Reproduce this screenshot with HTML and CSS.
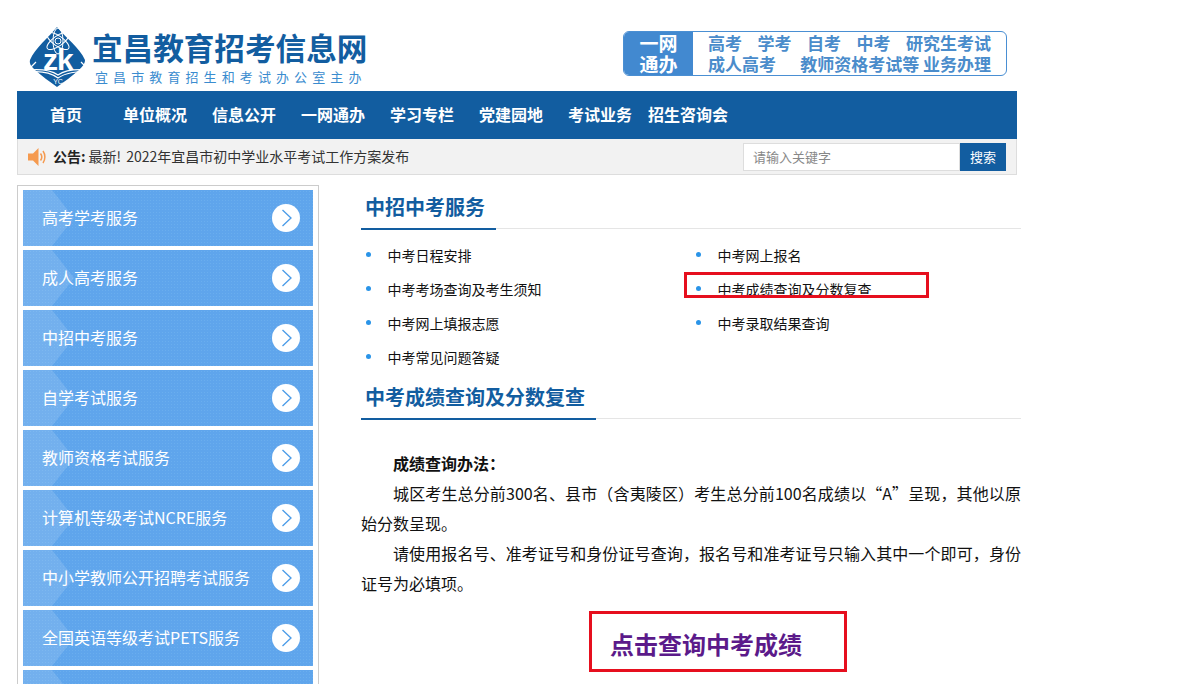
FILE: index.html
```html
<!DOCTYPE html>
<html lang="zh-CN">
<head>
    <meta charset="UTF-8">
    <meta name="viewport" content="width=device-width, initial-scale=1.0">
    <title>宜昌教育招考信息网</title>
    <link rel="stylesheet" href="styles.css">
</head>
<body>
    <div class="page_wrap">

        <div class="top_head">
            <div class="logo_box">
                <svg class="logo_icon" width="64" height="62" viewBox="0 0 64 62">
                    <path d="M30 1 C38 11 53 22 58 34 C58 38 55 41 52 44 C45 50 37 56 30 61 C23 56 15 50 8 44 C5 41 2 38 3 34 C8 22 22 11 30 1Z" fill="#125da0"/>
                    <g fill="none" stroke="#fff" stroke-width="1">
                        <ellipse cx="31" cy="15" rx="13" ry="5" transform="rotate(35 31 15)"/>
                        <ellipse cx="31" cy="15" rx="13" ry="5" transform="rotate(-35 31 15)"/>
                        <ellipse cx="31" cy="15" rx="13" ry="5" transform="rotate(90 31 15)"/>
                        <circle cx="31" cy="15" r="3"/>
                    </g>
                    <text x="16" y="44" class="logo_z">z</text>
                    <text x="30" y="44" class="logo_k">k</text>
                    <path d="M1 44 L9 36 M1 44 C12 43 24 44 31 49 C38 44 50 43 62 44 L54 36 M1 44 L3 46 C13 45 24 47 31 52 C38 47 50 45 60 46 L62 44" fill="none" stroke="#fff" stroke-width="1.2"/>
                    <text x="31" y="58" class="logo_yc">YC</text>
                </svg>
                <div class="logo_text">
                    <div class="logo_title">宜昌教育招考信息网</div>
                    <div class="logo_sub">宜昌市教育招生和考试办公室主办</div>
                </div>
            </div>

            <div class="top_links">
                <div class="top_links_left">一网<br>通办</div>
                <div class="top_links_right">
                    <div class="top_row">
                        <a>高考</a><a>学考</a><a>自考</a><a>中考</a><a>研究生考试</a>
                    </div>
                    <div class="top_row">
                        <a>成人高考</a><a>教师资格考试等 业务办理</a>
                    </div>
                </div>
            </div>
        </div>

        <ul class="nav_bar">
            <li class="nav_home">首页</li>
            <li>单位概况</li>
            <li>信息公开</li>
            <li>一网通办</li>
            <li>学习专栏</li>
            <li>党建园地</li>
            <li>考试业务</li>
            <li class="nav_last">招生咨询会</li>
        </ul>

        <div class="notice_bar">
            <svg class="notice_icon" width="20" height="20" viewBox="0 0 20 20">
                <path d="M0 6.5 H5 L10.5 1 V19 L5 13.5 H0Z" fill="#f59a4f"/>
                <path d="M12.5 6.5 C14 8.5 14 11.5 12.5 13.5 M15 4 C17.5 7.5 17.5 12.5 15 16" fill="none" stroke="#f59a4f" stroke-width="1.5"/>
            </svg>
            <b class="notice_label">公告:</b>
            <span class="notice_text">最新! 2022年宜昌市初中学业水平考试工作方案发布</span>
            <div class="search_box">
                <input class="search_input" type="text" placeholder="请输入关键字">
                <button class="search_btn">搜索</button>
            </div>
        </div>

        <div class="content">
            <div class="side_box">
                <a class="side_item"><span>高考学考服务</span><svg class="side_arrow" viewBox="0 0 28 28"><circle cx="14" cy="14" r="14" fill="#fff"/><path d="M10.5 6 L19 14 L10.5 22" fill="none" stroke="#4a9be8" stroke-width="1.3"/></svg></a>
                <a class="side_item"><span>成人高考服务</span><svg class="side_arrow" viewBox="0 0 28 28"><circle cx="14" cy="14" r="14" fill="#fff"/><path d="M10.5 6 L19 14 L10.5 22" fill="none" stroke="#4a9be8" stroke-width="1.3"/></svg></a>
                <a class="side_item"><span>中招中考服务</span><svg class="side_arrow" viewBox="0 0 28 28"><circle cx="14" cy="14" r="14" fill="#fff"/><path d="M10.5 6 L19 14 L10.5 22" fill="none" stroke="#4a9be8" stroke-width="1.3"/></svg></a>
                <a class="side_item"><span>自学考试服务</span><svg class="side_arrow" viewBox="0 0 28 28"><circle cx="14" cy="14" r="14" fill="#fff"/><path d="M10.5 6 L19 14 L10.5 22" fill="none" stroke="#4a9be8" stroke-width="1.3"/></svg></a>
                <a class="side_item"><span>教师资格考试服务</span><svg class="side_arrow" viewBox="0 0 28 28"><circle cx="14" cy="14" r="14" fill="#fff"/><path d="M10.5 6 L19 14 L10.5 22" fill="none" stroke="#4a9be8" stroke-width="1.3"/></svg></a>
                <a class="side_item"><span>计算机等级考试NCRE服务</span><svg class="side_arrow" viewBox="0 0 28 28"><circle cx="14" cy="14" r="14" fill="#fff"/><path d="M10.5 6 L19 14 L10.5 22" fill="none" stroke="#4a9be8" stroke-width="1.3"/></svg></a>
                <a class="side_item"><span>中小学教师公开招聘考试服务</span><svg class="side_arrow" viewBox="0 0 28 28"><circle cx="14" cy="14" r="14" fill="#fff"/><path d="M10.5 6 L19 14 L10.5 22" fill="none" stroke="#4a9be8" stroke-width="1.3"/></svg></a>
                <a class="side_item"><span>全国英语等级考试PETS服务</span><svg class="side_arrow" viewBox="0 0 28 28"><circle cx="14" cy="14" r="14" fill="#fff"/><path d="M10.5 6 L19 14 L10.5 22" fill="none" stroke="#4a9be8" stroke-width="1.3"/></svg></a>
                <a class="side_item"></a>
            </div>

            <div class="main_col">
                <div class="sec_title"><h2>中招中考服务</h2></div>
                <ul class="link_list">
                    <li>中考日程安排</li>
                    <li>中考网上报名</li>
                    <li>中考考场查询及考生须知</li>
                    <li class="marked">中考成绩查询及分数复查</li>
                    <li>中考网上填报志愿</li>
                    <li>中考录取结果查询</li>
                    <li>中考常见问题答疑</li>
                </ul>

                <div class="sec_title"><h2>中考成绩查询及分数复查</h2></div>
                <div class="article">
                    <p><b>成绩查询办法：</b></p>
                    <p>城区考生总分前300名、县市（含夷陵区）考生总分前100名成绩以“A”呈现，其他以原始分数呈现。</p>
                    <p>请使用报名号、准考证号和身份证号查询，报名号和准考证号只输入其中一个即可，身份证号为必填项。</p>
                </div>
                <a class="query_btn">点击查询中考成绩</a>
            </div>
        </div>

    </div>
</body>
</html>
```

FILE: styles.css
```css
html,body{
    margin: 0;
    padding: 0;
    height: 100%;
    overflow: hidden;
    background-color: #fff;
    font-family: "Noto Sans CJK SC", "Liberation Sans", sans-serif;
}
ul,p,h2{
    margin: 0;
    padding: 0;
}
ul{
    list-style: none;
}

.page_wrap{
    width: 1000px;
    margin-left: 17px;
}

/* top */
.top_head{
    height: 91px;
    box-sizing: border-box;
    padding-top: 26px;
    display: flex;
    justify-content: space-between;
    align-items: flex-start;
}
.logo_box{
    display: flex;
    padding-left: 10px;
}
.logo_icon{
    display: block;
    flex-shrink: 0;
}
.logo_z,.logo_k{
    fill: #fff;
    font-family: "Liberation Sans", sans-serif;
    font-weight: bold;
    font-size: 30px;
}
.logo_yc{
    fill: #fff;
    font-family: "Liberation Sans", sans-serif;
    font-size: 7px;
    text-anchor: middle;
}
.logo_text{
    margin-left: 1px;
}
.logo_title{
    font-size: 30.6px;
    line-height: 42px;
    font-weight: bold;
    color: #125da0;
    white-space: nowrap;
}
.logo_sub{
    margin-left: 3px;
    font-size: 13px;
    line-height: 17px;
    letter-spacing: 5.1px;
    color: #3a8ccf;
    white-space: nowrap;
}

.top_links{
    margin: 5px 10px 0 0;
    width: 384px;
    height: 45px;
    box-sizing: border-box;
    border: 1px solid #4a8fd3;
    border-radius: 6px;
    display: flex;
}
.top_links_left{
    width: 69px;
    background-color: #4289d0;
    border-radius: 5px 0 0 5px;
    color: #fff;
    font-size: 19px;
    font-weight: bold;
    line-height: 21px;
    text-align: center;
}
.top_links_right{
    width: 283px;
    margin-left: 15px;
}
.top_row{
    display: flex;
    justify-content: space-between;
    font-size: 17px;
    font-weight: bold;
    line-height: 21px;
    color: #4a8ccb;
    white-space: nowrap;
}

/* nav */
.nav_bar{
    height: 48px;
    box-sizing: border-box;
    background-color: #125da0;
    padding: 0 0 2px 33px;
    display: flex;
    align-items: center;
    gap: 25px;
}
.nav_bar li{
    color: #fff;
    font-size: 16px;
    font-weight: bold;
    white-space: nowrap;
}
.nav_home{
    margin-right: 16px;
}
.nav_last{
    margin-left: -9px;
}

/* notice */
.notice_bar{
    height: 36px;
    box-sizing: border-box;
    background-color: #f2f2f2;
    border: 1px solid #ddd;
    border-width: 0 1px 1px 1px;
    padding-left: 10px;
    display: flex;
    align-items: center;
    font-size: 14px;
    color: #333;
}
.notice_icon{
    flex-shrink: 0;
}
.notice_label{
    margin-left: 5px;
    margin-bottom: 1px;
    color: #222;
}
.notice_text{
    margin-left: 3px;
    margin-bottom: 1px;
    word-spacing: 2px;
    white-space: nowrap;
}
.search_box{
    margin-left: auto;
    margin-right: 10px;
    display: flex;
}
.search_input{
    width: 217px;
    height: 28px;
    box-sizing: border-box;
    border: 1px solid #ddd;
    outline: none;
    padding: 0 0 0 9px;
    font-size: 13px;
    font-family: inherit;
    background-color: #fff;
}
.search_input::placeholder{
    color: #888;
}
.search_btn{
    width: 46px;
    height: 28px;
    border: 0;
    padding: 0;
    background-color: #125da0;
    color: #fff;
    font-size: 13px;
    font-family: inherit;
}

/* content */
.content{
    margin-top: 10px;
    display: flex;
    align-items: flex-start;
}
.side_box{
    width: 302px;
    flex-shrink: 0;
    box-sizing: border-box;
    border: 1px solid #ccc;
    padding: 4px 5px;
    display: flex;
    flex-direction: column;
    gap: 4px;
}
.side_item{
    position: relative;
    height: 56px;
    display: flex;
    align-items: center;
    justify-content: space-between;
    padding: 0 13px 0 19px;
    color: #fff;
    font-size: 16px;
    white-space: nowrap;
    background-color: #5fa5ec;
    background-image: radial-gradient(#6aaeee 1px, transparent 1px);
    background-size: 3px 3px;
}
.side_item::before{
    content: "";
    position: absolute;
    left: 0;
    top: 0;
    width: 51px;
    height: 100%;
    background-color: rgba(255, 255, 255, 0.13);
    clip-path: polygon(0 0, 57% 0, 100% 50%, 57% 100%, 0 100%);
}
.side_item span{
    position: relative;
    margin-bottom: 2px;
}
.side_arrow{
    width: 28px;
    height: 28px;
    flex-shrink: 0;
}

.main_col{
    width: 660px;
    flex-shrink: 0;
    margin-left: 42px;
}
.sec_title{
    height: 43px;
    border-bottom: 1px solid #e5e5e5;
    display: flex;
}
.sec_title h2{
    height: 43px;
    padding: 0 11px 0 4px;
    border-bottom: 2px solid #125da0;
    font-size: 20px;
    font-weight: bold;
    line-height: 43px;
    color: #125da0;
    white-space: nowrap;
}
.link_list{
    margin-top: 10px;
    display: grid;
    grid-template-columns: 330px 330px;
    grid-auto-rows: 34px;
}
.link_list li{
    position: relative;
    padding-left: 26.5px;
    font-size: 14px;
    line-height: 32px;
    color: #111;
}
.link_list li::before{
    content: "";
    position: absolute;
    left: 5px;
    top: 13px;
    width: 5px;
    height: 5px;
    border-radius: 50%;
    background-color: #2a94e8;
}
.link_list .marked::after{
    content: "";
    position: absolute;
    left: -7px;
    top: -1px;
    width: 239px;
    height: 20px;
    border: 3px solid #e60f1e;
}

.article{
    margin-top: 29px;
    font-size: 16px;
    line-height: 30px;
    color: #111;
    text-align: justify;
}
.article p{
    text-indent: 32px;
}
.query_btn{
    display: block;
    width: 258px;
    height: 61px;
    box-sizing: border-box;
    margin: 13px 0 0 228px;
    padding-left: 18px;
    border: 3px solid #e60f1e;
    font-size: 24px;
    font-weight: bold;
    line-height: 59px;
    color: #5b1a8a;
    white-space: nowrap;
}
```
